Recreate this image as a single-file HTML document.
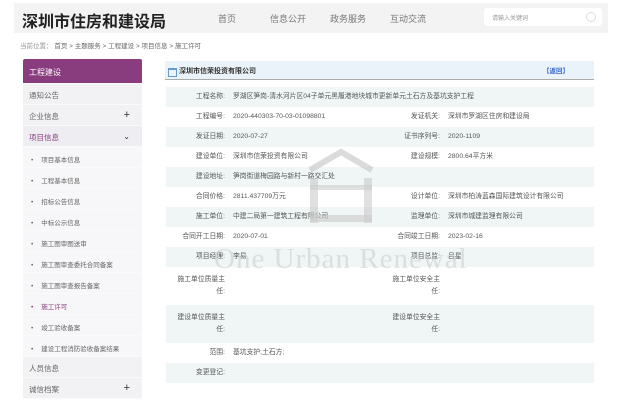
<!DOCTYPE html>
<html><head><meta charset="utf-8"><style>
*{margin:0;padding:0;box-sizing:border-box}
body{width:626px;height:403px;background:#fff;font-family:"Liberation Sans","Noto Sans CJK SC",sans-serif;position:relative;overflow:hidden;color:#555}
.hd{position:absolute;left:14px;top:3px;width:594px;height:30px;background:#f3f3f4}
.logo{position:absolute;left:8px;top:5px;font-size:16px;font-weight:bold;color:#222}
.nav{position:absolute;top:9px;font-size:9px;color:#777}
.search{position:absolute;left:470px;top:5px;width:118px;height:18px;background:#fff;border-radius:3px;font-size:6px;color:#999;padding:5px 0 0 8px}
.search i{position:absolute;right:6px;top:4px;width:10px;height:10px;border:1px solid #ddd;border-radius:50%}
.bc{position:absolute;left:20px;top:40px;font-size:6.5px;color:#999}
.bc b{font-weight:normal;color:#666}
.sb{position:absolute;left:23px;top:59px;width:119px}
.sb div{height:21px;background:#f2f2f5;font-size:7.5px;color:#666;padding:6px 0 0 6px;position:relative;border-bottom:1px solid #fafafa}
.sb .h{height:25px;background:#8a3d7e;color:#fff;padding-top:8px;font-size:8px;border-radius:2px 2px 0 0}
.sb .s{background:#f7f7f9;font-size:6.5px;padding:7px 0 0 8px}
.sb .s:before{content:"•";margin-right:8px}
.sb span{position:absolute;right:12px;top:4px;font-size:11px;color:#333}
.tt{position:absolute;left:165px;top:61px;width:429px;height:19px;background:#eaf3fa;border-bottom:1px solid #aaa;font-size:7px;color:#333;font-weight:bold;padding:5px 0 0 14px}
.tt:before{content:"";position:absolute;left:3px;top:7px;width:7px;height:6px;border:1px solid #69c;border-top:2px solid #69c}
.tt em{position:absolute;right:25px;top:4px;font-style:normal;color:#36c;font-size:6.5px}
table{position:absolute;left:166px;top:87px;width:428px;border-collapse:collapse;font-size:6.8px;color:#555}
td{height:20px;vertical-align:middle;line-height:12px}
tr.g td{background:#eff6f5}
td.l{text-align:right;width:67px;padding-right:8px}
td.l2{text-align:right;width:70px;padding-right:8px}
tr.t td{height:38px}
</style></head><body>
<div class="hd">
<div class="logo">深圳市住房和建设局</div>
<div class="nav" style="left:204px">首页</div>
<div class="nav" style="left:256px">信息公开</div>
<div class="nav" style="left:316px">政务服务</div>
<div class="nav" style="left:376px">互动交流</div>
<div class="search">请输入关键词<i></i></div>
</div>
<div class="bc">当前位置： <b>首页 &gt; 主题服务 &gt; 工程建设 &gt; 项目信息 &gt; 施工许可</b></div>
<div class="sb">
<div class="h">工程建设</div>
<div>通知公告</div>
<div>企业信息<span>+</span></div>
<div style="color:#8a3d7e;background:#eeeef2">项目信息<span style="font-size:8px;top:6px">⌄</span></div>
<div class="s">项目基本信息</div>
<div class="s">工程基本信息</div>
<div class="s">招标公告信息</div>
<div class="s">中标公示信息</div>
<div class="s">施工图审图送审</div>
<div class="s">施工图审查委托合同备案</div>
<div class="s">施工图审查报告备案</div>
<div class="s" style="color:#8a3d7e">施工许可</div>
<div class="s">竣工验收备案</div>
<div class="s">建设工程消防验收备案结果</div>
<div>人员信息</div>
<div>诚信档案<span>+</span></div>
</div>
<div class="tt">深圳市信荣投资有限公司<em>【返回】</em></div>
<table>
<tr class="g"><td class="l">工程名称:</td><td colspan="3">罗湖区笋岗-清水河片区04子单元黑履港地块城市更新单元土石方及基坑支护工程</td></tr>
<tr><td class="l">工程编号:</td><td style="width:145px">2020-440303-70-03-01098801</td><td class="l2">发证机关:</td><td>深圳市罗湖区住房和建设局</td></tr>
<tr class="g"><td class="l">发证日期:</td><td>2020-07-27</td><td class="l2">证书序列号:</td><td>2020-1109</td></tr>
<tr><td class="l">建设单位:</td><td>深圳市信荣投资有限公司</td><td class="l2">建设规模:</td><td>2800.64平方米</td></tr>
<tr class="g"><td class="l">建设地址:</td><td colspan="3">笋岗街道梅园路与新村一路交汇处</td></tr>
<tr><td class="l">合同价格:</td><td>2811.437709万元</td><td class="l2">设计单位:</td><td>深圳市柏涛蓝森国际建筑设计有限公司</td></tr>
<tr class="g"><td class="l">施工单位:</td><td>中建二局第一建筑工程有限公司</td><td class="l2">监理单位:</td><td>深圳市城建监理有限公司</td></tr>
<tr><td class="l">合同开工日期:</td><td>2020-07-01</td><td class="l2">合同竣工日期:</td><td>2023-02-16</td></tr>
<tr class="g"><td class="l">项目经理:</td><td>李易</td><td class="l2">项目总监:</td><td>吕星</td></tr>
<tr class="t"><td class="l">施工单位质量主<br>任:</td><td></td><td class="l2">施工单位安全主<br>任:</td><td></td></tr>
<tr class="t g"><td class="l">建设单位质量主<br>任:</td><td></td><td class="l2">建设单位安全主<br>任:</td><td></td></tr>
<tr><td class="l">范围:</td><td colspan="3">基坑支护;土石方;</td></tr>
<tr class="g"><td class="l">变更登记:</td><td colspan="3"></td></tr>
</table>
<svg style="position:absolute;left:296px;top:145px" width="90" height="100" viewBox="0 0 90 100">
<path d="M14 25 L45 7 L76 25" fill="none" stroke="#ccc" stroke-width="6" opacity=".7"/>
<rect x="14" y="33" width="8" height="45" fill="#ccc" opacity=".6"/>
<rect x="68" y="33" width="8" height="45" fill="#ccc" opacity=".6"/>
<rect x="14" y="40" width="62" height="5" fill="#ccc" opacity=".6"/>
<rect x="14" y="70" width="62" height="7" fill="#ccc" opacity=".6"/>
</svg>
<div style="position:absolute;left:214px;top:243px;font-family:'Liberation Serif',serif;font-size:29px;color:#ccc;opacity:.55;letter-spacing:1px">One Urban Renewal</div>
</body></html>
